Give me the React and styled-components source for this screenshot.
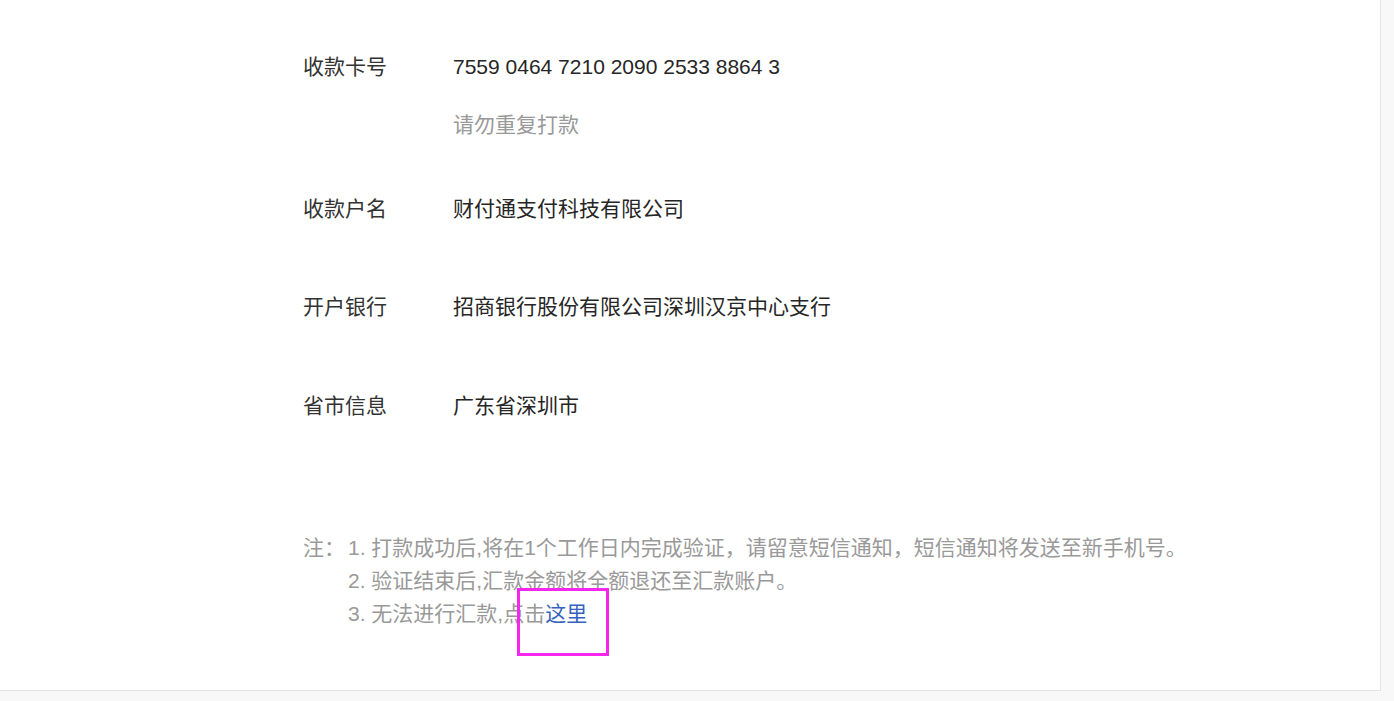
import styled, { createGlobalStyle } from "styled-components";

const GlobalStyle = createGlobalStyle`
  html, body {
    margin: 0;
    padding: 0;
    background: #f8f8f8;
    font-family: "Liberation Sans", Arial, "Noto Sans CJK SC", sans-serif;
  }
`

const fields = [
  { label: "收款卡号", value: "7559 0464 7210 2090 2533 8864 3", hint: "请勿重复打款", gap: 54 },
  { label: "收款户名", value: "财付通支付科技有限公司", gap: 68 },
  { label: "开户银行", value: "招商银行股份有限公司深圳汉京中心支行", gap: 69 },
  { label: "省市信息", value: "广东省深圳市", gap: 0 },
]

function App() {
  return (
    <>
      <GlobalStyle />
      <Card>
        {fields.map((f) => (
          <Field key={f.label} $gap={f.gap}>
            <Label>{f.label}</Label>
            <div>
              <Value>{f.value}</Value>
              {f.hint && <Hint>{f.hint}</Hint>}
            </div>
          </Field>
        ))}
        <Notes>
          <NoteTitle>注：</NoteTitle>
          <NoteList>
            <li>1. 打款成功后,将在1个工作日内完成验证，请留意短信通知，短信通知将发送至新手机号。</li>
            <li>2. 验证结束后,汇款金额将全额退还至汇款账户。</li>
            <li>
              3. 无法进行汇款,点击
              <Here href="#">
                这里
                <Mark />
              </Here>
            </li>
          </NoteList>
        </Notes>
      </Card>
    </>
  )
}

const Card = styled.div`
  box-sizing: border-box;
  width: 1381px;
  height: 691px;
  padding: 52px 0 0 303px;
  background: #fff;
  border-right: 1px solid #e4e4ee;
  border-bottom: 1px solid #e4e4ee;
`

const Field = styled.div`
  display: grid;
  grid-template-columns: 150px 1fr;
  padding-bottom: ${(p) => p.$gap}px;
  font-size: 21px;
  line-height: 30px;
`

const Label = styled.div`
  color: #333;
`

const Value = styled.div`
  color: #262626;
`

const Hint = styled.div`
  margin-top: 28px;
  color: #999;
`

const Notes = styled.div`
  display: grid;
  grid-template-columns: 45px 1fr;
  margin-top: 110px;
  font-size: 21px;
  line-height: 33px;
  color: #999;
`

const NoteTitle = styled.div``

const NoteList = styled.ul`
  margin: 0;
  padding: 0;
  list-style: none;
`

const Here = styled.a`
  position: relative;
  color: #3562bd;
  text-decoration: none;
`

const Mark = styled.span`
  position: absolute;
  left: -28px;
  top: -14px;
  box-sizing: border-box;
  width: 92px;
  height: 68px;
  border: 3px solid #f527ec;
  pointer-events: none;
`

export default App
